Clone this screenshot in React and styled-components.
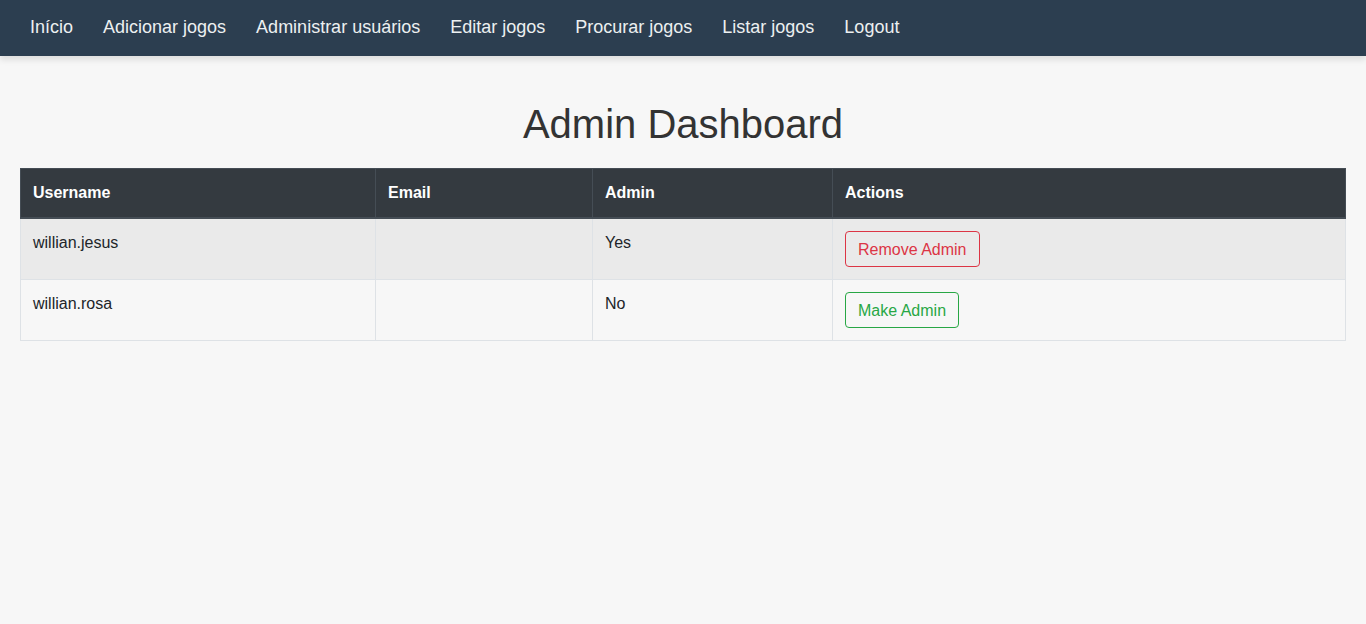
import React from "react";
import styled, { createGlobalStyle, css } from "styled-components";

const GlobalStyle = createGlobalStyle`
  *, *::before, *::after { box-sizing: border-box; }
  body {
    margin: 0;
    background: #f7f7f7;
    color: #212529;
    font-family: Arial, "Liberation Sans", sans-serif;
    font-size: 16px;
    line-height: 24px;
  }
`;

const NavBar = styled.nav`
  padding: 15px 15px 17px;
  background: #2c3e50;
  box-shadow: 0 4px 6px rgba(0, 0, 0, 0.1);
`;

const NavList = styled.ul`
  display: flex;
  flex-wrap: wrap;
  margin: 0;
  padding: 0;
  list-style: none;
`;

const NavItem = styled.li`
  margin: 0 15px;
`;

const NavLink = styled.a`
  display: block;
  color: #ecf0f1;
  font-size: 18px;
  text-decoration: none;
`;

const Main = styled.main`
  padding: 44px 20px 20px;
`;

const Title = styled.h1`
  margin: 0 0 20px;
  color: #333;
  font-size: 40px;
  font-weight: 500;
  line-height: 48px;
  text-align: center;
`;

const Table = styled.table`
  width: 100%;
  border: 1px solid #dee2e6;
  border-collapse: collapse;
`;

const HeadCell = styled.th`
  width: ${({ $width }) => $width};
  padding: 12px;
  border: 1px solid #454d55;
  border-bottom-width: 2px;
  background: #343a40;
  color: #fff;
  text-align: left;
`;

const Row = styled.tr`
  &:nth-of-type(odd) { background: rgba(0, 0, 0, 0.05); }
`;

const Cell = styled.td`
  padding: 12px;
  border: 1px solid #dee2e6;
  vertical-align: top;
`;

const tones = { danger: "#dc3545", success: "#28a745" };

const ActionButton = styled.button`
  display: block;
  padding: 6px 12px 4px;
  border: 1px solid;
  border-radius: 4px;
  background: transparent;
  cursor: pointer;
  font: inherit;
  ${({ $tone }) => css`
    border-color: ${tones[$tone]};
    color: ${tones[$tone]};
    &:hover { background: ${tones[$tone]}; color: #fff; }
  `}
`;

const links = [
  "Início",
  "Adicionar jogos",
  "Administrar usuários",
  "Editar jogos",
  "Procurar jogos",
  "Listar jogos",
  "Logout",
];

const users = [
  { username: "willian.jesus", email: "", admin: true },
  { username: "willian.rosa", email: "", admin: false },
];

export default function App() {
  return (
    <>
      <GlobalStyle />
      <NavBar>
        <NavList>
          {links.map((label) => (
            <NavItem key={label}>
              <NavLink href="#">{label}</NavLink>
            </NavItem>
          ))}
        </NavList>
      </NavBar>
      <Main>
        <Title>Admin Dashboard</Title>
        <Table>
          <thead>
            <tr>
              <HeadCell scope="col" $width="355px">Username</HeadCell>
              <HeadCell scope="col" $width="217px">Email</HeadCell>
              <HeadCell scope="col" $width="240px">Admin</HeadCell>
              <HeadCell scope="col">Actions</HeadCell>
            </tr>
          </thead>
          <tbody>
            {users.map(({ username, email, admin }) => (
              <Row key={username}>
                <Cell>{username}</Cell>
                <Cell>{email}</Cell>
                <Cell>{admin ? "Yes" : "No"}</Cell>
                <Cell>
                  <ActionButton type="button" $tone={admin ? "danger" : "success"}>
                    {admin ? "Remove Admin" : "Make Admin"}
                  </ActionButton>
                </Cell>
              </Row>
            ))}
          </tbody>
        </Table>
      </Main>
    </>
  );
}
